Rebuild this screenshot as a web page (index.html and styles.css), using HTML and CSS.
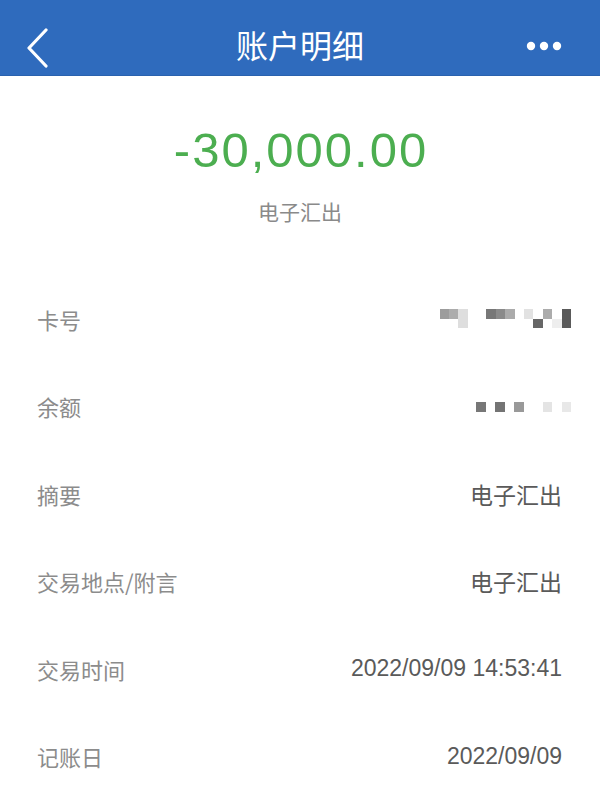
FILE: index.html
```html
<!DOCTYPE html>
<html lang="zh-CN">
<head>
<meta charset="utf-8">
<title>账户明细</title>
<link rel="stylesheet" href="styles.css">
</head>
<body>
<div class="page">
  <header class="nav">
    <svg class="nav-back" width="24" height="40" viewBox="0 0 24 40" aria-hidden="true">
      <polyline points="20,2 3,20 20,38" fill="none" stroke="#fff" stroke-width="3.2" stroke-linecap="round" stroke-linejoin="round"/>
    </svg>
    <h1 class="nav-title">账户明细</h1>
    <svg class="nav-more" width="36" height="10" viewBox="0 0 36 10" aria-hidden="true">
      <circle cx="5" cy="5" r="4.2" fill="#fff"/>
      <circle cx="18" cy="5" r="4.2" fill="#fff"/>
      <circle cx="31" cy="5" r="4.2" fill="#fff"/>
    </svg>
  </header>

  <section class="summary">
    <div class="amount">-30,000.00</div>
    <div class="amount-type">电子汇出</div>
  </section>

  <section class="details">
    <div class="row">
      <span class="label">卡号</span>
      <div class="mosaic mosaic-card">
        <i style="grid-area:1/1;background:#9c9c9c"></i>
        <i style="grid-area:1/2;background:#acacac"></i>
        <i style="grid-area:1/3/3/4;background:#dedede"></i>
        <i style="grid-area:1/6;background:#777"></i>
        <i style="grid-area:1/7;background:#8a8a8a"></i>
        <i style="grid-area:1/8;background:#ababab"></i>
        <i style="grid-area:1/10;background:#e2e2e2"></i>
        <i style="grid-area:2/11;background:#666"></i>
        <i style="grid-area:1/12;background:#acacac"></i>
        <i style="grid-area:2/13;background:#eee"></i>
        <i style="grid-area:1/14/3/15;background:#5a5a5a"></i>
      </div>
    </div>
    <div class="row">
      <span class="label">余额</span>
      <div class="mosaic mosaic-balance">
        <i style="grid-area:1/1;background:#777"></i>
        <i style="grid-area:1/3;background:#747474"></i>
        <i style="grid-area:1/5;background:#999"></i>
        <i style="grid-area:1/8;background:#e4e4e4"></i>
        <i style="grid-area:1/10;background:#e8e8e8"></i>
      </div>
    </div>
    <div class="row">
      <span class="label">摘要</span>
      <span class="value">电子汇出</span>
    </div>
    <div class="row">
      <span class="label">交易地点/附言</span>
      <span class="value">电子汇出</span>
    </div>
    <div class="row">
      <span class="label">交易时间</span>
      <span class="value">2022/09/09 14:53:41</span>
    </div>
    <div class="row">
      <span class="label">记账日</span>
      <span class="value">2022/09/09</span>
    </div>
  </section>
</div>
</body>
</html>
```

FILE: styles.css
```css
* { box-sizing: border-box; }
html, body {
  margin: 0;
  padding: 0;
  background: #fff;
}
body {
  font-family: "Liberation Sans", "Noto Sans CJK SC", sans-serif;
  width: 600px;
  height: 800px;
  overflow: hidden;
}
.page {
  display: flex;
  flex-direction: column;
}
.nav {
  height: 76px;
  background: #2f6bbd;
  border-bottom: 1px solid #2a62ae;
  display: flex;
  align-items: center;
  justify-content: space-between;
  padding: 0 38px 0 26px;
  position: relative;
}
.nav-back { display: block; margin-top: 20px; }
.nav-title {
  position: absolute;
  left: 0;
  right: 0;
  top: 0;
  height: 76px;
  margin: 0;
  text-align: center;
  font-family: "Noto Sans CJK SC", sans-serif;
  font-weight: 400;
  font-size: 32px;
  line-height: 88px;
  color: #fff;
  pointer-events: none;
}
.nav-more { display: block; margin-top: 16px; }

.summary {
  display: flex;
  flex-direction: column;
  align-items: center;
  padding-top: 46px;
}
.amount {
  font-family: "Liberation Sans", sans-serif;
  font-size: 49px;
  line-height: 56px;
  color: #4cae50;
  letter-spacing: 2px;
  margin-right: -2px;
}
.amount-type {
  margin-top: 18px;
  font-family: "Noto Sans CJK SC", sans-serif;
  font-size: 21px;
  line-height: 30px;
  color: #8a8a8a;
}

.details {
  margin-top: 49px;
  display: flex;
  flex-direction: column;
}
.row {
  height: 87.5px;
  display: flex;
  align-items: center;
  justify-content: space-between;
  padding: 0 38px 0 37px;
}
.label {
  font-family: "Noto Sans CJK SC", sans-serif;
  font-size: 22px;
  color: #8c8c8c;
}
.value {
  font-family: "Liberation Sans", "Noto Sans CJK SC", sans-serif;
  font-size: 23px;
  color: #5a5a5a;
}
.mosaic {
  display: grid;
  grid-template-rows: 9.5px 9.5px;
  grid-auto-columns: 9.4px;
  margin-right: -9px;
}
.mosaic-card {
  grid-template-columns: repeat(14, 9.4px);
}
.mosaic-balance {
  grid-template-columns: repeat(10, 9.5px);
  grid-template-rows: 10px;
  margin-top: 2px;
}
.mosaic i { display: block; }
```
